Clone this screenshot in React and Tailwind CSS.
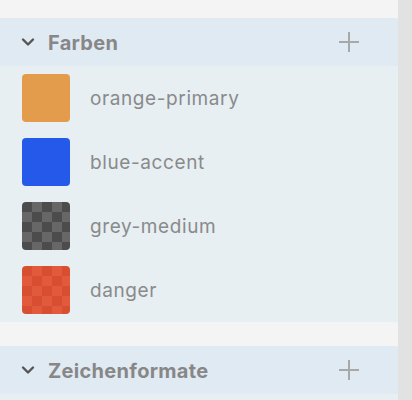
const font = { fontFamily: 'Inter, "Noto Sans", sans-serif' }

const colors = [
  { name: 'orange-primary', swatch: 'bg-[#e39c4c]' },
  { name: 'blue-accent', swatch: 'bg-[#2459e9]' },
  {
    name: 'grey-medium',
    swatch:
      'bg-[repeating-conic-gradient(#676767_0%_25%,#4c4c4c_0%_50%)] bg-size-[20px_20px]',
  },
  {
    name: 'danger',
    swatch:
      'bg-[repeating-conic-gradient(#e25a3c_0%_25%,#d74f30_0%_50%)] bg-size-[20px_20px]',
  },
]

function Chevron() {
  return (
    <svg width="14" height="10" viewBox="0 0 14 10" className="shrink-0">
      <path d="M2 2.5 L7 7.5 L12 2.5" fill="none" stroke="#555" strokeWidth="2.4" strokeLinecap="round" strokeLinejoin="round" />
    </svg>
  )
}

function Plus() {
  return (
    <svg width="22" height="22" viewBox="0 0 22 22">
      <path d="M11 1 V21 M1 11 H21" stroke="#a8a8a8" strokeWidth="2" />
    </svg>
  )
}

function SectionHeader({ title }) {
  return (
    <div className="h-12 bg-[#e0eaf3] flex items-center pl-[21px] pr-[38px]">
      <Chevron />
      <span className="ml-[13px] mt-[2px] text-[20px] tracking-[0.3px] font-bold text-[#878787] flex-1">{title}</span>
      <Plus />
    </div>
  )
}

export default function App() {
  return (
    <div className="w-[412px] h-[400px] flex bg-[#f4f4f4] overflow-hidden" style={font}>
      <div className="flex-1 flex flex-col">
        <div className="h-[18px]" />
        <SectionHeader title="Farben" />
        <div className="bg-[#e7eff3]">
          {colors.map((c) => (
            <div key={c.name} className="h-16 flex items-center pl-[22px]">
              <div className={`w-12 h-12 rounded-[4px] ${c.swatch}`} />
              <span className="ml-5 mt-[3px] text-[19px] tracking-[0.6px] text-[#8a8a8a]">{c.name}</span>
            </div>
          ))}
        </div>
        <div className="h-6" />
        <SectionHeader title="Zeichenformate" />
        <div className="flex-1 bg-[#e7eff3]" />
      </div>
      <div className="w-[14px] bg-[#e2e2e2]" />
    </div>
  )
}
